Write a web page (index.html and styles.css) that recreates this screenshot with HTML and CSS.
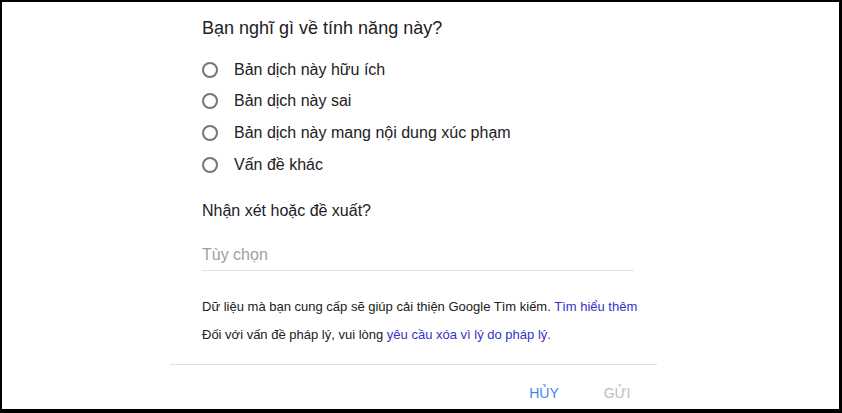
FILE: index.html
```html
<!DOCTYPE html>
<html lang="vi">
<head>
<meta charset="utf-8">
<title>Phản hồi</title>
<link rel="stylesheet" href="styles.css">
</head>
<body>
<div class="frame">
  <div class="dialog">
    <div class="content">
      <div class="title">Bạn nghĩ gì về tính năng này?</div>
      <div class="options">
        <label class="option"><span class="radio"></span><span>Bản dịch này hữu ích</span></label>
        <label class="option"><span class="radio"></span><span>Bản dịch này sai</span></label>
        <label class="option"><span class="radio"></span><span>Bản dịch này mang nội dung xúc phạm</span></label>
        <label class="option"><span class="radio"></span><span>Vấn đề khác</span></label>
      </div>
      <div class="label">Nhận xét hoặc đề xuất?</div>
      <div class="input"><span class="placeholder">Tùy chọn</span></div>
      <div class="notes">
        <p>Dữ liệu mà bạn cung cấp sẽ giúp cải thiện Google Tìm kiếm. <a class="link" href="#">Tìm hiểu thêm</a></p>
        <p>Đối với vấn đề pháp lý, vui lòng <a class="link" href="#">yêu cầu xóa vì lý do pháp lý.</a></p>
      </div>
    </div>
    <div class="divider"></div>
    <div class="actions">
      <span class="btn btn-cancel">Hủy</span>
      <span class="btn btn-send">Gửi</span>
    </div>
  </div>
</div>
</body>
</html>
```
FILE: styles.css
```css
html, body {
  margin: 0;
  padding: 0;
  background: #fff;
}
.frame {
  width: 842px;
  height: 413px;
  box-sizing: border-box;
  border-style: solid;
  border-color: #000;
  border-width: 2px 3px 4px 2px;
  overflow: hidden;
  font-family: "Liberation Sans", Arial, sans-serif;
  color: #212121;
}
.dialog {
  margin-left: 168px;
  width: 487px;
}
.content {
  padding: 14px 23px 0 32px;
}
.title {
  font-size: 18px;
  line-height: 24px;
}
.options {
  margin-top: 14px;
}
.option {
  display: flex;
  align-items: center;
  height: 31.67px;
  font-size: 16px;
  gap: 16px;
}
.radio {
  width: 12px;
  height: 12px;
  border: 2px solid #757575;
  border-radius: 50%;
  flex: none;
}
.label {
  margin-top: 18px;
  font-size: 16px;
  line-height: 24px;
}
.input {
  padding: 20px 0 3px;
  line-height: 24px;
  font-size: 16px;
  border-bottom: 1px solid #e0e0e0;
}
.placeholder {
  color: #9e9e9e;
}
.notes {
  margin-top: 22px;
  font-size: 13px;
}
.notes p {
  margin: 0;
  line-height: 28px;
  white-space: nowrap;
}
.link {
  color: #3434c4;
  text-decoration: none;
}
.divider {
  margin-top: 15px;
  height: 1px;
  background: #e0e0e0;
}
.actions {
  display: flex;
  justify-content: flex-end;
  gap: 9px;
  padding-right: 8px;
  margin-top: 10px;
}
.btn {
  min-width: 64px;
  height: 36px;
  line-height: 36px;
  text-align: center;
  font-size: 14px;
  text-transform: uppercase;
}
.btn-cancel {
  color: #4285f4;
}
.btn-send {
  color: #bdbdbd;
}
```
